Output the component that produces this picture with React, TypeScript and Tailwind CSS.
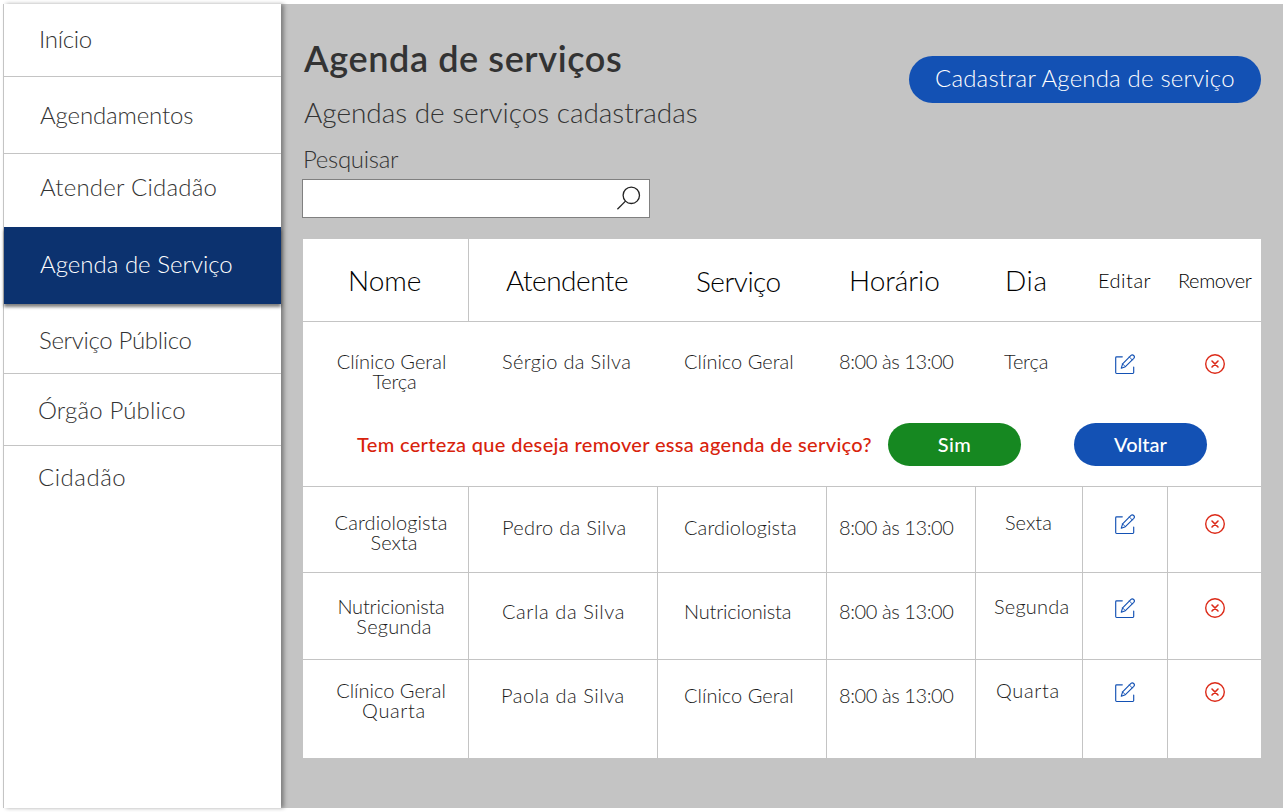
type MenuItem = { label: string; row: string; text: string; active?: boolean };

const menu: MenuItem[] = [
  { label: 'Início', row: 'h-[73px] border-b pt-[23px] pl-[35px]', text: 'tracking-[-0.3px]' },
  { label: 'Agendamentos', row: 'h-[77px] border-b pt-[26px] pl-[36px]', text: 'tracking-[-0.15px]' },
  { label: 'Atender Cidadão', row: 'h-[73px] pt-[21px] pl-[36px]', text: 'tracking-[0.22px]' },
  { label: 'Agenda de Serviço', row: 'h-[77px] pt-[25px] pl-[36px]', text: 'tracking-[0px]', active: true },
  { label: 'Serviço Público', row: 'h-[70px] border-b pt-[24px] pl-[35px]', text: 'tracking-[-0.32px]' },
  { label: 'Órgão Público', row: 'h-[72px] border-b pt-[24px] pl-[34px]', text: 'tracking-[0.15px]' },
  { label: 'Cidadão', row: 'h-[64px] pt-[19px] pl-[34px]', text: 'tracking-[0.5px]' },
];

const columns = [
  { label: 'Nome', cls: 'border-r pt-[27px] pl-[45px] text-[28px] leading-7' },
  { label: 'Atendente', cls: 'pt-[27px] pl-[37px] text-[28px] leading-7 tracking-[-0.5px]' },
  { label: 'Serviço', cls: 'pt-[28px] pl-[38px] text-[28px] leading-7 tracking-[-0.5px]' },
  { label: 'Horário', cls: 'pt-[27px] pl-[22px] text-[28px] leading-7 tracking-[-0.05px]' },
  { label: 'Dia', cls: 'pt-[27px] pl-[29px] text-[28px] leading-7 tracking-[0.6px]' },
  { label: 'Editar', cls: 'pt-[31px] pl-[15px] text-[20px] leading-5 tracking-[0.5px]' },
  { label: 'Remover', cls: 'pt-[31px] pl-[10px] text-[20px] leading-5 tracking-[-0.4px]' },
];

type Cell = { label: string; cls: string };
type Agenda = {
  top: string;
  mid: string;
  icon: string;
  name: Cell;
  day: Cell;
  dayPad: string;
  attendant: Cell;
  service: Cell;
};

const clinico: Cell = { label: 'Clínico Geral', cls: 'tracking-[0px]' };
const cardiologista: Cell = { label: 'Cardiologista', cls: 'tracking-[0.1px]' };
const nutricionista: Cell = { label: 'Nutricionista', cls: 'tracking-[-0.2px]' };

const pending: Agenda = {
  top: 'pt-[29px]',
  mid: 'pt-[29px]',
  icon: 'pt-[32px]',
  name: clinico,
  day: { label: 'Terça', cls: 'tracking-[-0.2px]' },
  dayPad: 'pl-[28px]',
  attendant: { label: 'Sérgio da Silva', cls: 'pl-[33px] tracking-[0.35px]' },
  service: clinico,
};

const agendas: (Agenda & { height: string })[] = [
  {
    height: 'h-[86px] border-b',
    top: 'pt-[25px]',
    mid: 'pt-[30px]',
    icon: 'pt-[27px]',
    name: cardiologista,
    day: { label: 'Sexta', cls: '' },
    dayPad: 'pl-[29px]',
    attendant: { label: 'Pedro da Silva', cls: 'pl-[33px] tracking-[0.28px]' },
    service: cardiologista,
  },
  {
    height: 'h-[87px] border-b',
    top: 'pt-[23px]',
    mid: 'pt-[28px]',
    icon: 'pt-[25px]',
    name: nutricionista,
    day: { label: 'Segunda', cls: 'tracking-[0.2px]' },
    dayPad: 'pl-[18px]',
    attendant: { label: 'Carla da Silva', cls: 'pl-[33px] tracking-[0.58px]' },
    service: nutricionista,
  },
  {
    height: 'h-[98px]',
    top: 'pt-[20px]',
    mid: 'pt-[25px]',
    icon: 'pt-[22px]',
    name: clinico,
    day: { label: 'Quarta', cls: 'tracking-[0.65px]' },
    dayPad: 'pl-[20px]',
    attendant: { label: 'Paola da Silva', cls: 'pl-[32px] tracking-[0.5px]' },
    service: clinico,
  },
];

const grid = 'grid grid-cols-[166px_189px_169px_149px_107px_85px_93px] whitespace-nowrap border-[#c4c4c4]';

function EditIcon() {
  return (
    <svg width="21" height="21" viewBox="0 0 21 21" fill="none" stroke="#1351b4" strokeWidth="1.15" strokeLinecap="round" strokeLinejoin="round">
      <path d="M7.3 2.8H1.6Q.7 2.8.7 3.7V18.6Q.7 19.5 1.6 19.5H17.8Q18.7 19.5 18.7 18.6V13" />
      <path d="M6.3 14.2 7.6 9.9 16 1.4Q17.3.2 18.7 1.5 20.1 2.9 18.8 4.3L10.4 12.7Z" />
      <path d="M14.4 3 17.2 5.9M7.6 9.9 10.4 12.7" strokeWidth=".9" />
    </svg>
  );
}

function RemoveIcon() {
  return (
    <svg width="20" height="20" viewBox="0 0 20 20" fill="none" stroke="#dc2a18" strokeLinecap="round">
      <circle cx="10" cy="10" r="9.3" strokeWidth="1.4" />
      <path d="M7 7 13 13M13 7 7 13" strokeWidth="1.6" />
    </svg>
  );
}

function SearchIcon() {
  return (
    <svg width="26" height="26" viewBox="0 0 26 26" fill="none" stroke="#222" strokeWidth="1.3">
      <circle cx="15.3" cy="10.3" r="8.2" />
      <path d="M9.5 16.1 1.4 24.2" />
    </svg>
  );
}

function AgendaCells({ agenda, line }: { agenda: Agenda; line: string }) {
  const { top, mid, icon, name, day, dayPad, attendant, service } = agenda;
  return (
    <>
      <div className={`${top} ${line} text-center`}>
        <div className={`pl-[11px] ${name.cls}`}>{name.label}</div>
        <div className={`pl-[17px] ${day.cls}`}>{day.label}</div>
      </div>
      <div className={`${mid} ${line} ${attendant.cls}`}>{attendant.label}</div>
      <div className={`${mid} ${line} pl-[26px] ${service.cls}`}>{service.label}</div>
      <div className={`${mid} ${line} pl-[12px] tracking-[-0.42px]`}>8:00 às 13:00</div>
      <div className={`${top} ${line} ${dayPad} ${day.cls}`}>{day.label}</div>
      <div className={`${icon} ${line} pl-[32px]`}>
        <EditIcon />
      </div>
      <div className={`${icon} pl-[37px]`}>
        <RemoveIcon />
      </div>
    </>
  );
}

export default function App() {
  return (
    <div className="h-[812px] w-[1283px] overflow-hidden bg-white pt-1 pl-[3px] font-['Lato',sans-serif] font-light">
      <div className="flex h-[804px]">
        <nav className="relative z-10 flex w-[278px] shrink-0 flex-col border-l border-[#c4c4c4] bg-white shadow-[3px_0_4px_rgba(0,0,0,0.35)]">
          {menu.map((item) => (
            <a
              key={item.label}
              className={`block border-[#c4c4c4] text-2xl leading-6 whitespace-nowrap ${item.row} ${item.text} ${
                item.active ? 'relative bg-[#0c326f] text-white shadow-[0_3px_3px_rgba(0,0,0,0.5)]' : 'text-[#333]'
              }`}
            >
              {item.label}
            </a>
          ))}
        </nav>

        <main className="flex-1 bg-[#c4c4c4] pr-[22px] pl-[21px]">
          <header className="flex items-start justify-between pt-[36px] text-[#333]">
            <div className="pl-[2px]">
              <h1 className="text-[36px] leading-9 font-semibold tracking-[0.6px]">Agenda de serviços</h1>
              <h2 className="mt-[22px] text-[28px] leading-7 tracking-[-0.03px]">Agendas de serviços cadastradas</h2>
              <label className="mt-[21px] -ml-px block text-2xl leading-6 tracking-[-0.3px]">Pesquisar</label>
            </div>
            <button className="mt-[16px] flex h-[47px] w-[352px] justify-start rounded-full bg-[#1351b4] pt-[10px] pl-[26px] text-2xl leading-6 tracking-[0.18px] whitespace-nowrap text-white">
              Cadastrar Agenda de serviço
            </button>
          </header>

          <div className="mt-[8px] flex h-[39px] w-[348px] items-start justify-end border border-[#808080] bg-white pt-[5px] pr-[7px]">
            <SearchIcon />
          </div>

          <section className="mt-[21px] ml-px w-[958px] bg-white text-[20px] leading-5 text-[#1c1c1c]">
            <div className={`${grid} h-[83px] border-b text-black`}>
              {columns.map((c) => (
                <div key={c.label} className={`border-[#c4c4c4] ${c.cls}`}>
                  {c.label}
                </div>
              ))}
            </div>

            <div className="h-[165px] border-b border-[#c4c4c4]">
              <div className={`${grid} h-[101px]`}>
                <AgendaCells agenda={pending} line="" />
              </div>
              <div className="flex font-medium whitespace-nowrap">
                <p className="w-[585px] pt-[11px] pl-[54px] tracking-[0.33px] text-[#d8230c]">
                  Tem certeza que deseja remover essa agenda de serviço?
                </p>
                <button className="flex h-[43px] w-[133px] justify-center rounded-full bg-[#168821] pt-[11px] leading-5 tracking-[0.5px] text-white">
                  Sim
                </button>
                <button className="ml-[53px] flex h-[43px] w-[133px] justify-center rounded-full bg-[#1351b4] pt-[11px] leading-5 text-white">
                  Voltar
                </button>
              </div>
            </div>

            {agendas.map((a) => (
              <div key={a.day.label} className={`${grid} ${a.height}`}>
                <AgendaCells agenda={a} line="border-r border-[#c4c4c4]" />
              </div>
            ))}
          </section>
        </main>
      </div>
    </div>
  );
}
